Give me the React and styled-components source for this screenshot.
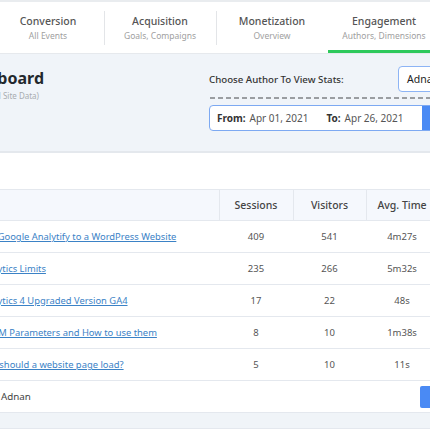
import styled, { createGlobalStyle } from 'styled-components';

const GlobalStyle = createGlobalStyle`
  body {
    margin: 0;
    background: #fff;
    font-family: "Noto Sans", "Open Sans", sans-serif;
  }
`;

const Viewport = styled.div`
  width: 430px;
  height: 430px;
  overflow: hidden;
`;

const Page = styled.div`
  width: 680px;
  margin-left: -160px;
`;

const TabBar = styled.div`
  display: flex;
  padding-left: 152px;
  border-top: 2px solid #e9ecef;
  border-bottom: 1px solid #e6e9ed;
  background: #fff;
`;

const Tab = styled.div`
  position: relative;
  width: 112px;
  height: 51px;
  display: flex;
  flex-direction: column;
  align-items: center;
  padding-top: 12px;
  box-sizing: border-box;
  border-bottom: 3px solid ${(p) => (p.$active ? '#2ec95c' : 'transparent')};

  & + &::before {
    content: '';
    position: absolute;
    left: 0;
    top: 9px;
    height: 34px;
    border-left: 1px solid #e3e5e8;
  }
`;

const TabTitle = styled.div`
  font-size: 10.5px;
  font-weight: 500;
  color: #555;
  line-height: 14px;
`;

const TabSub = styled.div`
  font-size: 8.5px;
  color: #a0a0a0;
  line-height: 12px;
  margin-top: 2px;
`;

const Header = styled.div`
  display: flex;
  height: 99px;
  box-sizing: border-box;
  padding: 12px 11px 0 0;
  background: #f0f4f9;
  border-bottom: 2px solid #e4e8ed;
`;

const TitleBlock = styled.div`
  width: 204px;
  text-align: right;
  white-space: nowrap;
`;

const Heading = styled.h1`
  margin: 0;
  font-size: 16px;
  font-weight: 700;
  line-height: 24px;
  color: #23282d;
`;

const SubHeading = styled.div`
  margin: 0 5px 0 0;
  font-size: 8px;
  line-height: 12px;
  color: #a8acb0;
`;

const Controls = styled.div`
  width: 300px;
  margin-left: auto;
`;

const AuthorRow = styled.div`
  display: flex;
  align-items: center;
  height: 26px;
`;

const Label = styled.label`
  width: 189px;
  font-size: 9.7px;
  font-weight: 500;
  color: #333;
  white-space: nowrap;
`;

const Select = styled.div`
  flex: 1;
  height: 26px;
  box-sizing: border-box;
  border: 1.5px solid #8db4f5;
  border-radius: 4px;
  background: #fff;
  padding-left: 8px;
  display: flex;
  align-items: center;
  font-size: 10.5px;
  color: #222;
`;

const Dashed = styled.div`
  margin: 5px 0 6px 1px;
  height: 2px;
  background: repeating-linear-gradient(90deg, #9a9da1 0 5px, transparent 5px 8px);
`;

const DateBox = styled.div`
  display: flex;
  height: 26px;
  box-sizing: border-box;
  border: 1.5px solid #7da9f2;
  border-radius: 4px;
  background: #fff;
  overflow: hidden;
`;

const DateFields = styled.div`
  width: 212px;
  display: flex;
  align-items: center;
  padding-left: 7px;
  box-sizing: border-box;
  font-size: 10px;
  color: #555;
  white-space: nowrap;
`;

const DateLabel = styled.b`
  color: #333;
  font-weight: 700;
  margin-right: 4px;
  margin-left: ${(p) => p.$gap || 0}px;
`;

const ApplyButton = styled.div`
  flex: 1;
  background: #4a8af4;
`;

const Spacer = styled.div`
  height: 36px;
`;

const Table = styled.table`
  width: 100%;
  border-collapse: collapse;
  table-layout: fixed;
  border-top: 1px solid #e4e8ee;
`;

const Th = styled.th`
  height: 30px;
  padding: 0;
  font-size: 10.5px;
  font-weight: 500;
  color: #444;
  background: #f5f8fd;
  border-left: 1px solid #e4e8ee;
  border-bottom: 1px solid #e4e8ee;
  text-align: center;

  &:first-child {
    border-left: none;
    text-align: left;
    padding-left: 104px;
  }
`;

const Td = styled.td`
  height: 31px;
  padding: 0;
  font-size: 9.5px;
  color: #555;
  text-align: center;
  border-bottom: 1px solid #e4e8ee;
`;

const TitleCell = styled(Td)`
  text-align: left;
  padding-left: 104px;
  white-space: nowrap;
  overflow: hidden;
`;

const PostLink = styled.a`
  color: #3b82c6;
  text-decoration: underline;
  font-size: 9.4px;
`;

const FooterCell = styled.td`
  height: 31px;
  padding: 0 10px 0 161px;
  border-bottom: 1px solid #e4e8ee;
`;

const FooterInner = styled.div`
  display: flex;
  align-items: center;
  justify-content: space-between;
  font-size: 9.8px;
  color: #444;
`;

const ViewButton = styled.div`
  width: 90px;
  height: 22px;
  background: #4a8af4;
  border-radius: 2px;
`;

const BottomBand = styled.div`
  height: 15px;
  background: #f0f4f8;
  border-bottom: 1px solid #e4e8ee;
`;

const tabs = [
  { title: 'Conversion', sub: 'All Events' },
  { title: 'Acquisition', sub: 'Goals, Compaigns' },
  { title: 'Monetization', sub: 'Overview' },
  { title: 'Engagement', sub: 'Authors, Dimensions', active: true },
];

const posts = [
  ['How to Add Google Analytify to a WordPress Website', 409, 541, '4m27s'],
  ['Google Analytics Limits', 235, 266, '5m32s'],
  ['Google Analytics 4 Upgraded Version GA4', 17, 22, '48s'],
  ['What are UTM Parameters and How to use them', 8, 10, '1m38s'],
  ['How quickly should a website page load?', 5, 10, '11s'],
];

export default function App() {
  return (
    <Viewport>
      <GlobalStyle />
      <Page>
        <TabBar>
          {tabs.map((t) => (
            <Tab key={t.title} $active={t.active}>
              <TabTitle>{t.title}</TabTitle>
              <TabSub>{t.sub}</TabSub>
            </Tab>
          ))}
        </TabBar>
        <Header>
          <TitleBlock>
            <Heading>Authors Dashboard</Heading>
            <SubHeading>(Overall Site Data)</SubHeading>
          </TitleBlock>
          <Controls>
            <AuthorRow>
              <Label>Choose Author To View Stats:</Label>
              <Select>Adnan</Select>
            </AuthorRow>
            <Dashed />
            <DateBox>
              <DateFields>
                <DateLabel>From:</DateLabel>Apr 01, 2021
                <DateLabel $gap={18}>To:</DateLabel>Apr 26, 2021
              </DateFields>
              <ApplyButton />
            </DateBox>
          </Controls>
        </Header>
        <Spacer />
        <Table>
          <colgroup>
            <col style={{ width: 379 }} />
            <col style={{ width: 74 }} />
            <col style={{ width: 73 }} />
            <col style={{ width: 72 }} />
            <col />
          </colgroup>
          <thead>
            <tr>
              <Th>Title</Th>
              <Th>Sessions</Th>
              <Th>Visitors</Th>
              <Th>Avg. Time</Th>
              <Th>Bounce Rate</Th>
            </tr>
          </thead>
          <tbody>
            {posts.map(([title, sessions, visitors, time]) => (
              <tr key={title}>
                <TitleCell>
                  <PostLink href="#">{title}</PostLink>
                </TitleCell>
                <Td>{sessions}</Td>
                <Td>{visitors}</Td>
                <Td>{time}</Td>
                <Td>0%</Td>
              </tr>
            ))}
          </tbody>
          <tfoot>
            <tr>
              <FooterCell colSpan={5}>
                <FooterInner>
                  <span>Adnan</span>
                  <ViewButton />
                </FooterInner>
              </FooterCell>
            </tr>
          </tfoot>
        </Table>
        <BottomBand />
      </Page>
    </Viewport>
  );
}
